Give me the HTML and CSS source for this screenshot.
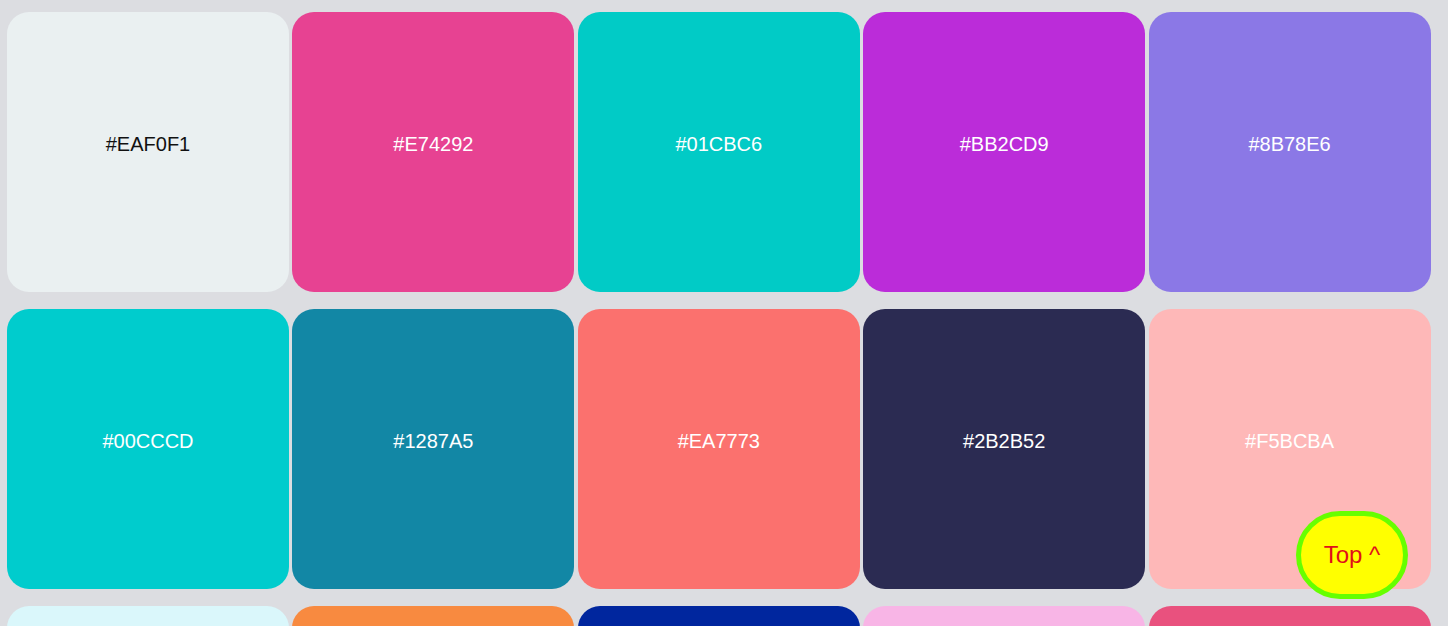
FILE: index.html
```html
<!DOCTYPE html>
<html lang="en">
<head>
<meta charset="utf-8">
<title>Palette</title>
<link rel="stylesheet" href="styles.css">
</head>
<body>
<main class="grid">
  <div class="swatch dark-text" style="background:#EAF0F1">#EAF0F1</div>
  <div class="swatch" style="background:#E74292">#E74292</div>
  <div class="swatch" style="background:#01CBC6">#01CBC6</div>
  <div class="swatch" style="background:#BB2CD9">#BB2CD9</div>
  <div class="swatch" style="background:#8B78E6">#8B78E6</div>
  <div class="swatch" style="background:#00CCCD">#00CCCD</div>
  <div class="swatch" style="background:#1287A5">#1287A5</div>
  <div class="swatch" style="background:#FB716E">#EA7773</div>
  <div class="swatch" style="background:#2B2B52">#2B2B52</div>
  <div class="swatch" style="background:#FEB8B8">#F5BCBA</div>
  <div class="swatch dark-text" style="background:#DAF7FB">#DAF7FB</div>
  <div class="swatch" style="background:#F88A40">#F88A40</div>
  <div class="swatch" style="background:#00269E">#00269E</div>
  <div class="swatch" style="background:#F8B5E6">#F8B5E6</div>
  <div class="swatch" style="background:#E9517E">#E9517E</div>
</main>
<a class="top-btn" href="#">Top ^</a>
</body>
</html>
```

FILE: styles.css
```css
html, body {
  margin: 0;
  padding: 0;
  background: #dcdde1;
  font-family: "Liberation Sans", Arial, sans-serif;
}

.grid {
  display: grid;
  grid-template-columns: repeat(5, 282px);
  grid-auto-rows: 280px;
  column-gap: 3.4px;
  row-gap: 17px;
  padding: 12px 0 20px 7px;
}

.swatch {
  border-radius: 22px;
  display: flex;
  align-items: center;
  justify-content: center;
  padding-bottom: 16px;
  box-sizing: border-box;
  color: #ffffff;
  font-size: 20px;
}

.swatch.dark-text {
  color: #111111;
}

.top-btn {
  position: fixed;
  right: 40px;
  bottom: 27px;
  width: 112px;
  height: 88px;
  box-sizing: border-box;
  border: 5px solid #66ff00;
  border-radius: 46px;
  background: #ffff00;
  color: #e0101a;
  font-size: 24px;
  text-decoration: none;
  display: flex;
  align-items: center;
  justify-content: center;
}
```
